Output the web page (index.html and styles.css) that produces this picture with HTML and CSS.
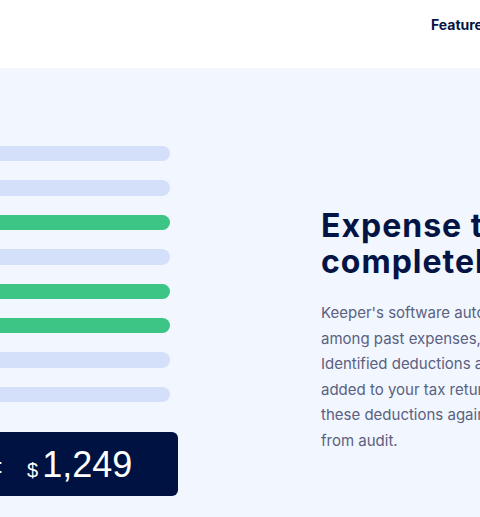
FILE: index.html
```html
<!DOCTYPE html>
<html lang="en">
<head>
<meta charset="utf-8">
<title>Keeper</title>
<link rel="stylesheet" href="styles.css">
</head>
<body>
<header class="site-header">
  <nav class="nav">
    <a class="nav-link" href="#">Features</a>
    <a class="nav-link" href="#">Pricing</a>
  </nav>
</header>
<section class="feature">
  <div class="visual">
    <div class="bars">
      <div class="bar"></div>
      <div class="bar"></div>
      <div class="bar bar-green"></div>
      <div class="bar"></div>
      <div class="bar bar-green"></div>
      <div class="bar bar-green"></div>
      <div class="bar"></div>
      <div class="bar"></div>
    </div>
    <div class="total">
      <div class="total-label"><span>Total:</span></div>
      <span class="total-amount"><span class="currency">$</span>1,249</span>
    </div>
  </div>
  <div class="copy">
    <h2 class="title">Expense tracking,<br>completely automated</h2>
    <p class="text">Keeper's software automatically scans for write-offs<br>among past expenses, using your bank statements.<br>Identified deductions are automatically<br>added to your tax return, and we'll defend<br>these deductions against the IRS, protecting you<br>from audit.</p>
  </div>
</section>
</body>
</html>
```

FILE: styles.css
```css
html, body {
  margin: 0;
  padding: 0;
}
body {
  width: 480px;
  height: 517px;
  overflow: hidden;
  font-family: Inter, "Noto Sans", sans-serif;
  background: #f1f6ff;
}
.site-header {
  height: 68px;
  background: #ffffff;
  display: flex;
  align-items: flex-start;
}
.nav {
  display: flex;
  gap: 32px;
  padding-left: 431px;
  padding-top: 15px;
  white-space: nowrap;
}
.nav-link {
  font-size: 14px;
  font-weight: 700;
  color: #031445;
  text-decoration: none;
  line-height: 20px;
}
.feature {
  display: flex;
  align-items: flex-start;
  width: 900px;
}
.visual {
  flex: none;
  width: 278px;
  margin-left: -100px;
  padding-top: 78px;
}
.bars {
  display: flex;
  flex-direction: column;
  gap: 19px;
  margin-right: 8px;
}
.bar {
  height: 15.4px;
  border-radius: 8px;
  background: #d4e0fa;
}
.bar-green {
  background: #3dc585;
}
.total {
  margin-top: 30px;
  height: 64px;
  border-radius: 6px;
  background: #001241;
  color: #ffffff;
  display: flex;
  align-items: center;
  font-family: "Liberation Sans", Arial, sans-serif;
}
.total-label {
  flex: none;
  width: 103px;
  display: flex;
  justify-content: flex-end;
  font-size: 20px;
  white-space: nowrap;
  padding-top: 4px;
}
.total-amount {
  margin-left: 24px;
  font-size: 36px;
  line-height: 40px;
  padding-top: 6px;
}
.currency {
  font-size: 20px;
  margin-right: 4px;
}
.copy {
  flex: none;
  width: 560px;
  margin-left: 143px;
  padding-top: 140px;
}
.title {
  margin: 0;
  font-size: 32px;
  line-height: 36px;
  font-weight: 700;
  letter-spacing: 1px;
  color: #031445;
  white-space: nowrap;
}
.text {
  margin: 20px 0 0;
  font-size: 15px;
  line-height: 25.6px;
  color: #5b6180;
  white-space: nowrap;
}
```
